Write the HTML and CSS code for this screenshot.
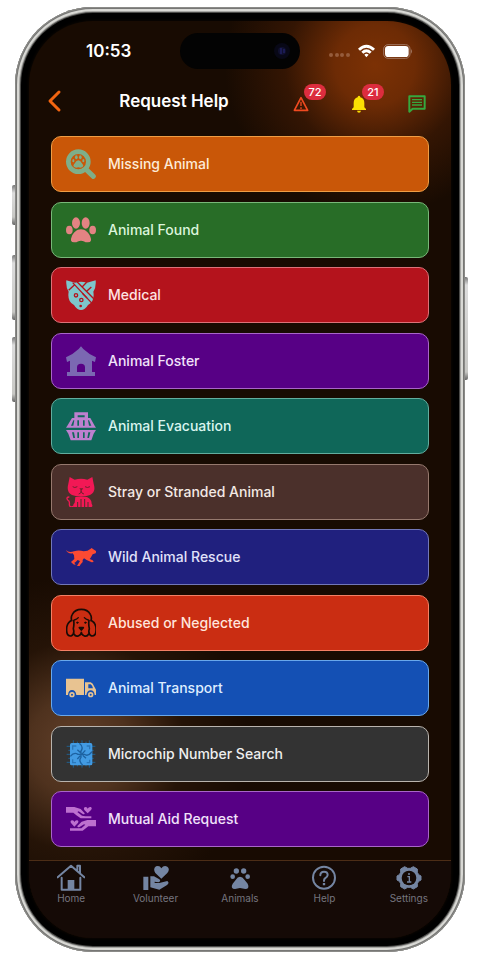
FILE: index.html
```html
<!DOCTYPE html>
<html lang="en">
<head>
	<meta charset="UTF-8">
	<meta name="viewport" content="width=device-width, initial-scale=1.0">
	<title>Request Help</title>
	<link rel="stylesheet" href="styles.css">
</head>
<body>
	<div class="phone">
		<span class="side-button action"></span>
		<span class="side-button volume-up"></span>
		<span class="side-button volume-down"></span>
		<span class="side-button power"></span>
		<div class="bezel">
			<div class="screen">
				<div class="status-bar">
					<span class="time">10:53</span>
					<div class="island">
						<svg viewBox="0 0 20 20" width="20" height="20"><circle cx="10" cy="10" r="8" fill="#080816"/><circle cx="10" cy="10" r="4" fill="#10102e"/><path d="M9 7v6M12 8v4" stroke="#27277a" stroke-width="1"/></svg>
					</div>
					<div class="status-icons">
						<svg class="signal" viewBox="0 0 21 4" width="21" height="4"><circle cx="2" cy="2" r="2"/><circle cx="8" cy="2" r="2"/><circle cx="13" cy="2" r="2"/><circle cx="19" cy="2" r="2"/></svg>
						<svg class="wifi" viewBox="0 0 57 42" width="19" height="14"><path d="M3 14Q28 -9 54 14L48 20Q28 2 9 20ZM13 23Q28 9 44 23L38 29Q28 20 19 29ZM22 32Q28 26 35 32L28 40Z" fill="#fff"/></svg>
						<svg class="battery" viewBox="0 0 90 45" width="30" height="15"><rect x="2" y="2" width="79" height="41" rx="13" fill="none" stroke="#a07660" stroke-width="3"/><rect x="6" y="6" width="71" height="33" rx="10" fill="#fff"/><path d="M84 15q6 7 0 14z" fill="#a07660"/></svg>
					</div>
				</div>

				<header class="header">
					<button class="back" aria-label="Back">
						<svg viewBox="0 0 16 24" width="16" height="24"><path d="M13 3L4 12L13 21" fill="none" stroke="#f26511" stroke-width="3" stroke-linecap="round" stroke-linejoin="round"/></svg>
					</button>
					<h1 class="title">Request Help</h1>
					<div class="actions">
						<button class="action-button" aria-label="Alerts">
							<svg viewBox="0 0 48 48" width="16" height="16"><path d="M24 5L44 43H4Z" fill="none" stroke="#f04a20" stroke-width="5" stroke-linejoin="round"/><path d="M24 17v13M24 34v5" stroke="#f04a20" stroke-width="4"/></svg>
							<span class="badge">72</span>
						</button>
						<button class="action-button" aria-label="Notifications">
							<svg viewBox="0 0 48 54" width="16" height="18"><path d="M24 2q4 0 4 5q12 3 12 17v13l5 5v3H3v-3l5-5V24Q8 10 20 7q0-5 4-5ZM18 47h12q-1 6-6 6t-6-6Z" fill="#fbe003"/></svg>
							<span class="badge">21</span>
						</button>
						<button class="action-button" aria-label="Messages">
							<svg viewBox="0 0 54 54" width="18" height="18"><path d="M4 4H50V41H14L4 50Z" fill="none" stroke="#36a83e" stroke-width="6" stroke-linejoin="round"/><path d="M12 14h30M12 22h30M12 30h30" stroke="#36a83e" stroke-width="4"/></svg>
						</button>
					</div>
				</header>

				<main class="list">
					<button class="row missing">
						<svg viewBox="0 0 90 90"><circle cx="37" cy="38" r="30" fill="none" stroke="currentColor" stroke-width="14"/><path d="M64 65L82 82" stroke="currentColor" stroke-width="15" stroke-linecap="round"/><g fill="currentColor"><path d="M37 34q6 0 10 8q9 9 1 13q-5 2-11 0q-6 2-11 0q-8-4 1-13q4-8 10-8Z"/><ellipse cx="31" cy="25" rx="4" ry="6"/><ellipse cx="43" cy="25" rx="4" ry="6"/><ellipse cx="22" cy="35" rx="3" ry="5"/><ellipse cx="52" cy="35" rx="3" ry="5"/></g></svg>
						<span>Missing Animal</span>
					</button>
					<button class="row found">
						<svg viewBox="0 0 90 90" fill="currentColor"><ellipse cx="30" cy="24" rx="12" ry="17"/><ellipse cx="59" cy="24" rx="12" ry="17"/><ellipse cx="10" cy="45" rx="10" ry="13"/><ellipse cx="80" cy="45" rx="10" ry="13"/><path d="M45 43C58 43 68 53 73 65Q80 81 66 82C57 83 53 77 45 77S33 83 24 82Q10 81 17 65C22 53 32 43 45 43Z"/></svg>
						<span>Animal Found</span>
					</button>
					<button class="row medical">
						<svg viewBox="0 0 90 90"><path d="M1 1L27 8Q45 3 63 8L89 1Q91 21 82 35Q87 65 66 75Q57 90 45 90T24 75Q3 65 8 35Q-1 21 1 1Z" fill="currentColor"/><g stroke="#b4131c" fill="none" stroke-width="4"><path d="M20 8L78 70M33 5L84 57M8 31L25 15M49 20L62 7M62 34L76 21"/><circle cx="30" cy="46" r="5"/><circle cx="46" cy="60" r="5"/><path d="M49 40L63 54"/><circle cx="44" cy="78" r="2"/></g></svg>
						<span>Medical</span>
					</button>
					<button class="row foster">
						<svg viewBox="0 0 90 90" fill="currentColor"><path fill-rule="evenodd" d="M45 1L52 9Q70 26 90 34L87 48L78 44V78H87V90H3V78H12V44L3 48L0 34Q20 26 38 9ZM33 78H57V64Q57 53 45 53T33 64Z"/></svg>
						<span>Animal Foster</span>
					</button>
					<button class="row evacuation">
						<svg viewBox="0 0 90 90" fill="currentColor"><path fill-rule="evenodd" d="M25 21V4H66V21H73L86 44L90 50H0L4 44L18 21ZM35 19H56V13H35ZM22 28L15 44H22L25 28ZM34 28V44H39V28ZM51 28V44H56V28ZM66 28L69 44H76L69 28Z"/><path fill-rule="evenodd" d="M0 57H90L83 68L76 88H14L7 68ZM18 64L22 81H27L24 64ZM34 64V81H39V64ZM51 64V81H56V64ZM67 64L64 81H69L73 64Z"/></svg>
						<span>Animal Evacuation</span>
					</button>
					<button class="row stray">
						<svg viewBox="0 0 90 90"><path d="M11 0L26 8Q45 2 64 8L79 0L83 20Q91 46 72 54Q46 65 18 54Q0 46 7 20Z" fill="currentColor"/><path d="M28 60H63Q77 66 77 80Q83 90 73 91H26Q17 87 26 77Z" fill="currentColor"/><path d="M24 87Q10 94 10 82Q12 72 5 69Q-1 60 10 60" fill="none" stroke="currentColor" stroke-width="4"/><path d="M20 29Q26 34 34 29M57 29Q64 34 72 29M38 51Q46 49 46 43Q46 50 54 51M45 38v8" fill="none" stroke="#72202e" stroke-width="3"/><path d="M40 34H52L46 41Z" fill="#72202e"/><path d="M35 75V91M45 66V91M56 66V91M66 75V91" stroke="#4b302b" stroke-width="3"/></svg>
						<span>Stray or Stranded Animal</span>
					</button>
					<button class="row wild">
						<svg viewBox="0 0 90 90" fill="currentColor"><path d="M0 24Q7 33 24 28Q38 23 53 28Q66 28 73 21L77 18L82 22L91 28L89 34L80 37L74 47L71 51L80 55L83 60L77 61L62 54L54 49L50 54L50 60L44 67L41 72H33L38 64L42 57L35 54L29 60L25 62L29 69L22 67L15 60L25 51L24 40L20 34Q5 36 0 24Z"/></svg>
						<span>Wild Animal Rescue</span>
					</button>
					<button class="row abused">
						<svg viewBox="0 0 90 90" fill="none" stroke="currentColor" stroke-width="5" stroke-linejoin="round" stroke-linecap="round"><path d="M17 38Q14 27 19 19Q27 4 46 4T73 19Q78 27 75 38M17 37Q0 46 2 69Q3 85 15 84Q27 79 22 62Q25 48 23 38M75 37Q92 46 90 69Q89 85 77 84Q65 79 70 62Q67 48 69 38M24 78Q29 87 38 83Q46 80 46 73Q46 80 54 83Q63 87 68 78"/><path d="M25 36Q33 34 37 29M67 36Q59 34 55 29" stroke-width="4"/><circle cx="34" cy="44" r="2" fill="currentColor" stroke-width="3"/><circle cx="58" cy="44" r="2" fill="currentColor" stroke-width="3"/><path d="M40 59H52L46 66Z" fill="currentColor"/></svg>
						<span>Abused or Neglected</span>
					</button>
					<button class="row transport">
						<svg viewBox="0 0 90 90" fill="currentColor"><path d="M0 17H54V66H31Q29 51 18 51T6 66H0ZM57 28H74Q81 30 85 41L90 50V66H86Q85 52 74 52T61 66H57Z"/><path d="M67 34H74Q79 37 81 46H67Z" fill="#1450b4"/><circle cx="18" cy="65" r="8"/><circle cx="74" cy="65" r="8"/><circle cx="18" cy="65" r="3" fill="#1450b4"/><circle cx="74" cy="65" r="3" fill="#1450b4"/></svg>
						<span>Animal Transport</span>
					</button>
					<button class="row microchip">
						<svg viewBox="0 0 90 90"><path d="M22 4V86M34 8V82M48 4V86M60 8V82M70 4V86M2 22H88M7 34H83M2 46H88M7 58H83M2 70H88" stroke="#20608f" stroke-width="3"/><rect x="12" y="12" width="67" height="67" rx="5" fill="currentColor"/><path d="M40 13Q54 24 45 36V55Q36 66 50 78M13 52Q24 38 36 46H55Q66 54 78 38M34 32L45 42M58 34L47 46M34 60L43 50M60 58L50 49" fill="none" stroke="#1d62a1" stroke-width="4"/><path d="M20 32V21H31M62 21H71V31M20 61V71H30M62 71H71V62" fill="none" stroke="#2b78bb" stroke-width="4"/></svg>
						<span>Microchip Number Search</span>
					</button>
					<button class="row mutual">
						<svg viewBox="0 0 90 90" fill="currentColor"><path d="M0 9H25L44 15L56 28Q56 33 49 29L38 22L34 24L48 35L58 37H76V43H44L31 34L22 26H0ZM65 28L55 18Q51 10 59 9Q64 9 65 14Q68 8 74 9Q80 12 75 18ZM90 48H64L47 53L34 66Q34 72 42 68L54 61L58 62L46 73H12V80H50L67 67H90ZM25 68L15 57Q11 50 19 49Q24 49 25 54Q28 48 34 49Q40 52 35 58Z"/></svg>
						<span>Mutual Aid Request</span>
					</button>
				</main>

				<nav class="tabs">
					<a href="#" class="tab">
						<svg viewBox="0 0 84 84"><path d="M14 41V77H70V41M2 40L42 5L82 40M61 19V5H69V29" fill="none" stroke="currentColor" stroke-width="6" stroke-linejoin="round" stroke-linecap="round"/><path d="M32 77V48H52V77Z" fill="currentColor"/></svg>
						<span>Home</span>
					</a>
					<a href="#" class="tab">
						<svg viewBox="0 0 84 84" fill="currentColor"><path d="M4 38H19V78H4ZM25 37H36L52 46Q58 52 50 55L38 53V57H52L76 51Q84 57 74 64L52 77L25 70ZM58 44L40 27Q32 14 42 7Q53 3 58 13Q65 3 76 8Q85 15 76 27Z"/></svg>
						<span>Volunteer</span>
					</a>
					<a href="#" class="tab">
						<svg viewBox="0 0 84 84" fill="currentColor"><circle cx="20" cy="38" r="7"/><circle cx="31" cy="21" r="8"/><circle cx="53" cy="21" r="8"/><circle cx="65" cy="38" r="7"/><path d="M42 38Q49 38 56 48L65 59Q72 74 58 75L42 72L27 75Q12 74 20 59L29 48Q35 38 42 38Z"/></svg>
						<span>Animals</span>
					</a>
					<a href="#" class="tab">
						<svg viewBox="0 0 84 84" fill="none" stroke="currentColor" stroke-width="6"><circle cx="42" cy="41" r="33"/><path d="M31 34Q31 23 42 23T53 33Q53 38 45 43Q42 45 42 51" stroke-linecap="round"/><path d="M42 57v7" stroke-width="7"/></svg>
						<span>Help</span>
					</a>
					<a href="#" class="tab">
						<svg viewBox="0 0 84 84"><path d="M29 8L38 13H46L55 8L67 15V25L71 32L78 36V48L71 52L67 59V68L55 75L46 70H38L29 75L17 68V59L13 52L6 48V36L13 32L17 25V15Z" fill="currentColor" stroke="currentColor" stroke-width="3" stroke-linejoin="round"/><circle cx="42" cy="42" r="22" fill="#150a06"/><path d="M37 38H43V53M36 54H49" fill="none" stroke="currentColor" stroke-width="4"/><circle cx="42" cy="30" r="3" fill="currentColor"/></svg>
						<span>Settings</span>
					</a>
				</nav>
			</div>
		</div>
	</div>
</body>
</html>
```
FILE: styles.css
```css
* {
	box-sizing: border-box;
}
body {
	display: flex;
	min-height: 100vh;
	margin: 0;
	padding: 7px 15px 8px;
	background-color: white;
	font-family: Inter, "Liberation Sans", sans-serif;
	color: white;
}
button {
	border: 0;
	padding: 0;
	background: none;
	color: inherit;
	font-family: inherit;
	cursor: pointer;
}
svg {
	display: block;
}

/* phone body */
.phone {
	position: relative;
	display: flex;
	flex: 1;
	padding: 6px;
	border-radius: 78px;
	background-color: #4a4a48;
	box-shadow: inset 0 0 0 1px #8b8b88, inset 0 0 0 2px #777775, inset 0 0 0 4px #d9d9d5, inset 0 0 0 5px #a5a5a2;
}
.bezel {
	display: flex;
	flex: 1;
	padding: 8px;
	border-radius: 72px;
	background-color: black;
}
.side-button {
	position: absolute;
	left: -3px;
	width: 3px;
	border-radius: 2px 0 0 2px;
	background: linear-gradient(#777, #ddd 8px, #c8c8c5 calc(100% - 8px), #666);
}
.action { top: 178px; height: 40px; }
.volume-up { top: 248px; height: 65px; }
.volume-down { top: 330px; height: 65px; }
.power {
	top: 270px;
	left: auto;
	right: -3px;
	height: 103px;
	border-radius: 0 2px 2px 0;
}
.screen {
	display: flex;
	flex: 1;
	flex-direction: column;
	overflow: hidden;
	border-radius: 64px;
	background:
		radial-gradient(circle at 346px 44px, #7c3105, #6d2b05 40px, rgba(70, 28, 4, 0.6) 90px, transparent 150px),
		radial-gradient(circle at 50px 725px, #62402a, #4f321e 50px, rgba(50, 28, 12, 0.5) 105px, transparent 170px),
		#180b02;
	box-shadow: 0 0 3px 1px #0b0602;
}

.status-bar {
	display: grid;
	grid-template-columns: 1fr 120px 1fr;
	align-items: center;
	padding-top: 12px;
}
.time {
	padding-left: 57px;
	font-size: 17px;
	font-weight: 600;
}
.island {
	display: flex;
	align-items: center;
	justify-content: flex-end;
	height: 36px;
	padding-right: 8px;
	border-radius: 18px;
	background-color: #030303;
}
.status-icons {
	display: flex;
	align-items: center;
	justify-content: flex-end;
	gap: 7px;
	padding-right: 38px;
}
.signal {
	margin-top: 8px;
	fill: #955c3c;
}

.header {
	display: flex;
	align-items: center;
	height: 64px;
	padding: 0 5px 0 17px;
}
.title {
	flex: 1;
	margin: 0 0 0 14px;
	font-size: 17px;
	font-weight: 600;
	text-align: center;
	white-space: nowrap;
}
.actions {
	display: flex;
	padding-top: 6px;
}
.action-button {
	position: relative;
	display: grid;
	place-items: center;
	width: 58px;
	height: 24px;
}
.badge {
	position: absolute;
	top: -8px;
	left: 32px;
	width: 22px;
	border-radius: 8px;
	background-color: #dc2d3e;
	font-size: 11px;
	font-weight: 500;
	line-height: 16px;
	text-align: center;
}

.list {
	display: flex;
	flex: 1;
	flex-direction: column;
	justify-content: space-between;
	padding: 3px 22px 13px;
}
.row {
	display: flex;
	align-items: center;
	gap: 12px;
	height: 56px;
	padding: 0 14px;
	border: 1px solid;
	border-radius: 10px;
	font-size: 14px;
	font-weight: 500;
	line-height: 16px;
	text-align: left;
}
.row svg {
	flex: none;
	width: 30px;
	height: 30px;
}
.missing { background-color: #c95708; border-color: #ef9d45; color: #fdebd8; }
.missing svg { color: #7fae88; }
.found { background-color: #286d27; border-color: #78b878; color: #dcf5dc; }
.found svg { color: #e38383; }
.medical { background-color: #b4131c; border-color: #dc7279; color: #ffe3e3; }
.medical svg { color: #7ec6cb; }
.foster { background-color: #570085; border-color: #a865c8; color: #f1e2fa; }
.foster svg { color: #7b68b2; }
.evacuation { background-color: #0f6759; border-color: #62ad9f; color: #d9f5ef; }
.evacuation svg { color: #bd80cf; }
.stray { background-color: #4b302b; border-color: #96796e; color: #f3e9e4; }
.stray svg { color: #f21855; }
.wild { background-color: #20207e; border-color: #7277b8; color: #e0e2fa; }
.wild svg { color: #fc4a32; }
.abused { background-color: #ca2d12; border-color: #f48065; color: #ffe5dc; }
.abused svg { color: #180b06; }
.transport { background-color: #1450b4; border-color: #69a8ec; color: #deedff; }
.transport svg { color: #e8c391; }
.microchip { background-color: #333333; border-color: #b9b4ae; color: #eeeeee; }
.microchip svg { color: #429be3; }
.mutual { background-color: #570085; border-color: #a865c8; color: #f1e2fa; }
.mutual svg { color: #bd70cf; }

.tabs {
	display: grid;
	grid-template-columns: repeat(5, 1fr);
	height: 78px;
	border-top: 1px solid #4c2d16;
	background-color: #150a06;
}
.tab {
	display: flex;
	flex-direction: column;
	align-items: center;
	padding-top: 3px;
	color: #75757f;
	font-size: 10px;
	line-height: 12px;
	text-decoration: none;
}
.tab svg {
	width: 28px;
	height: 28px;
	color: #7485a2;
}
```
